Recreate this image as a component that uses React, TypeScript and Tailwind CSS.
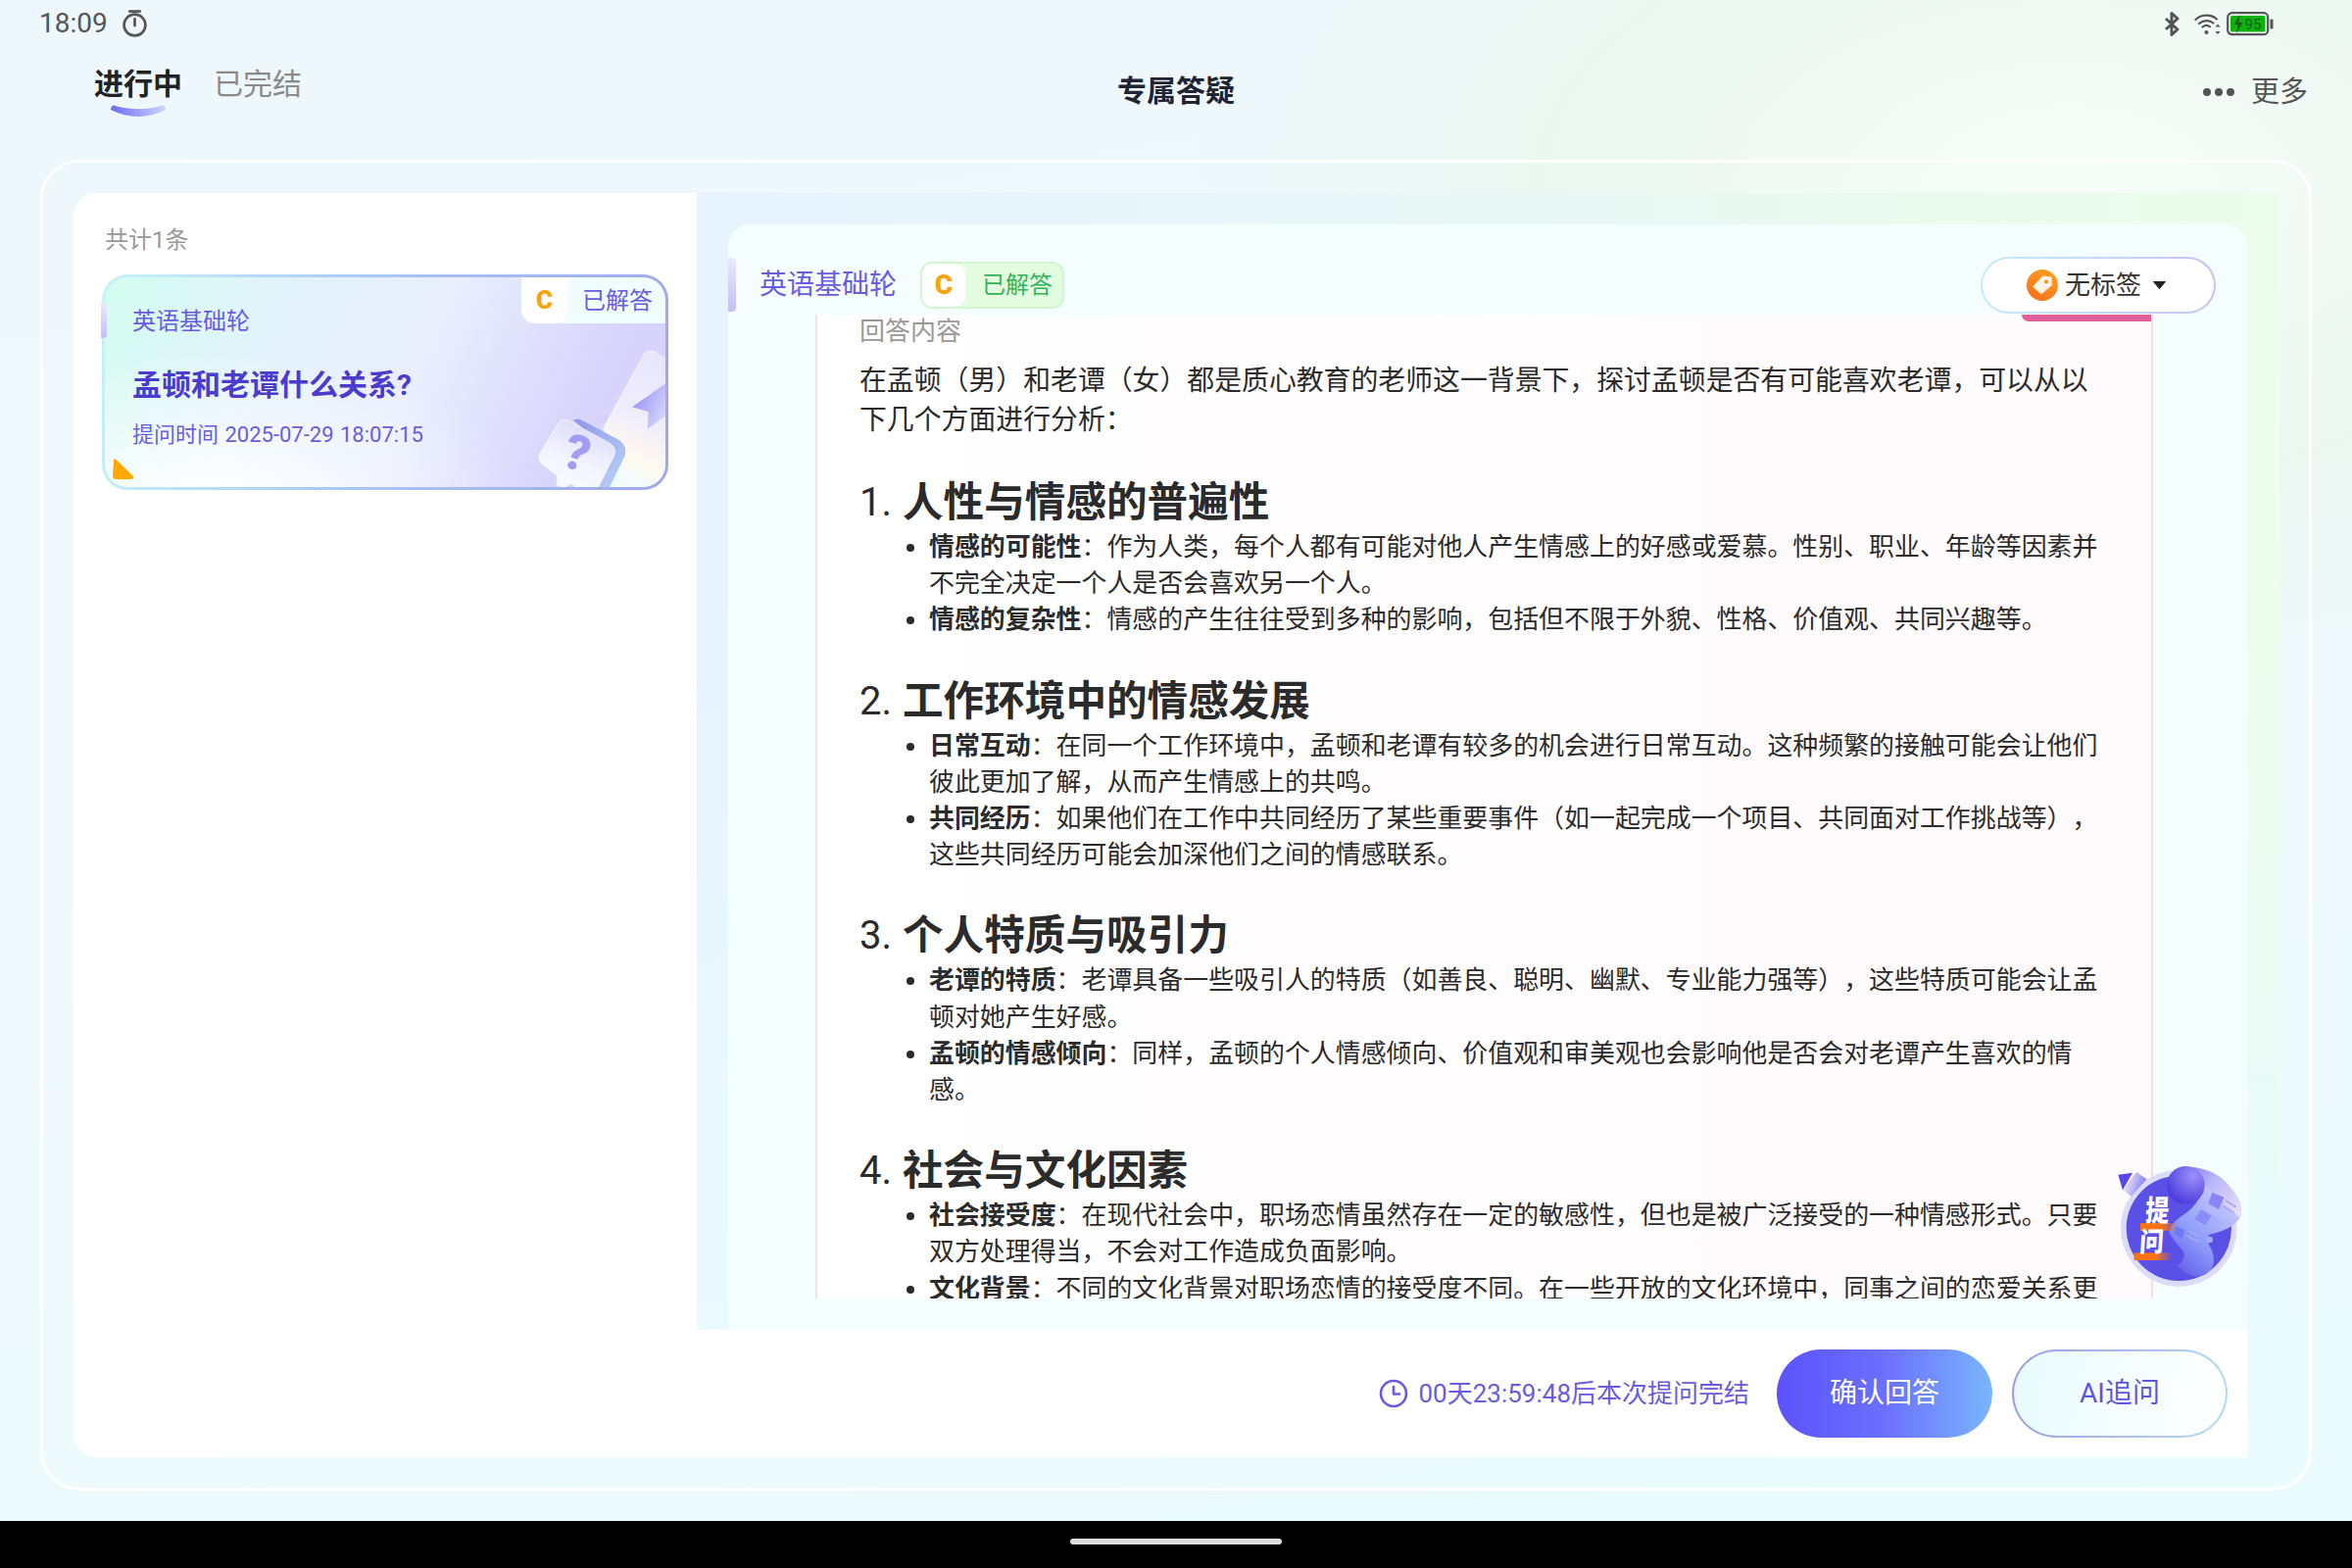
import React from "react";

const Stopwatch = () => (
  <svg width="27" height="30" viewBox="0 0 26 28" fill="none" stroke="#555" strokeWidth="2.6">
    <path d="M8 2h10" strokeLinecap="round" />
    <circle cx="13" cy="15.5" r="10.5" />
    <path d="M13 9.5v6.5" strokeLinecap="round" />
  </svg>
);

const StatusIcons = () => (
  <div className="flex items-center">
    <svg width="17" height="25" viewBox="0 0 17 25" fill="none" stroke="#555" strokeWidth="3">
      <path d="M2 7l12 11-6 5.5V1.5L14 7 2 18" strokeLinejoin="round" />
    </svg>
    <svg className="ml-[14px]" width="28" height="23" viewBox="0 0 28 23" fill="none" stroke="#555" strokeLinecap="round">
      <path d="M1.5 7C7 1.5 17 1 23 6.5" strokeWidth="2.2" />
      <path d="M5 11c4-3.5 10-4 14.500 -.5" strokeWidth="2.2" />
      <path d="M8.500 14.500c2.500-2 5.500-2 7.500-.2" strokeWidth="2.2" />
      <circle cx="12.500" cy="20" r="2" fill="#555" stroke="none" />
      <path d="M24 11.500l-2.500 3h5zM24 22l-2.500-3h5z" fill="#555" stroke="none" />
    </svg>
    <svg className="ml-[5px]" width="48" height="25" viewBox="0 0 48 25">
      <rect x="1.200" y="1.200" width="41" height="22" rx="4.500" fill="none" stroke="#555" strokeWidth="2.200" />
      <rect x="4" y="4" width="35.500" height="16.500" rx="1.500" fill="#0db30d" />
      <rect x="44.500" y="7.500" width="3" height="10" rx="1" fill="#555" />
      <path d="M13.500 3l-6 10h4l-1.500 9 6.500-11h-4z" fill="#1c5a1c" />
      <text x="18.500" y="18" fontSize="15" fill="#14601a" fontFamily="Roboto, sans-serif">95</text>
    </svg>
  </div>
);

const CardDeco = () => (
  <svg className="absolute left-[413px] top-[-8px]" width="180" height="240" viewBox="0 0 540 720">
    <defs>
      <linearGradient id="dp" x1="0.8" y1="0" x2="0.5" y2="1">
        <stop offset="0" stopColor="#e6e4fd" />
        <stop offset="0.55" stopColor="#f0eefc" />
        <stop offset="0.8" stopColor="#fff9ee" />
        <stop offset="1" stopColor="#f0fcff" />
      </linearGradient>
      <linearGradient id="db" x1="0" y1="0" x2="1" y2="0.6">
        <stop offset="0" stopColor="#8f88f2" />
        <stop offset="1" stopColor="#d9d6fc" />
      </linearGradient>
      <linearGradient id="dk" x1="0" y1="0" x2="0.8" y2="1">
        <stop offset="0" stopColor="#8e96e8" />
        <stop offset="1" stopColor="#b9d2f6" />
      </linearGradient>
      <linearGradient id="df" x1="0.7" y1="0" x2="0.3" y2="1">
        <stop offset="0" stopColor="#d9d9fa" />
        <stop offset="0.6" stopColor="#f4f4fe" />
        <stop offset="1" stopColor="#f7fbff" />
      </linearGradient>
    </defs>
    <path d="M408 266Q422 240 448 254L540 302V680H270L290 480Z" fill="url(#dp)" />
    <path d="M408 266Q422 240 448 254" stroke="#ffffff" strokeWidth="3" fill="none" />
    <path d="M408 266L285 490" stroke="#ffffff" strokeWidth="2" fill="none" />
    <path d="M375 421L490 340V440L422 488L425 436Z" fill="url(#db)" />
    <path d="M196 462Q206 454 222 462L335 522Q362 540 352 572L300 680H262L310 560Z" fill="url(#dk)" />
    <path d="M148 472Q160 454 182 464L304 530Q330 546 320 570L270 670H205L190 655L165 668L145 660L145 630L105 600Q82 585 94 562Z" fill="url(#df)" stroke="#ffffff" strokeWidth="2" />
    <text x="168" y="612" fontSize="150" fontWeight="900" fill="#a29cf2" fontFamily="Roboto, sans-serif" transform="rotate(18 200 560)">?</text>
  </svg>
);

const AskBall = () => (
  <svg className="absolute left-[1429px] top-[973px]" width="170" height="170" viewBox="0 0 510 510">
    <defs>
      <linearGradient id="br" x1="0" y1="0" x2="1" y2="1">
        <stop offset="0" stopColor="#8f8af5" />
        <stop offset="0.35" stopColor="#b8b6fa" />
        <stop offset="1" stopColor="#efe2f4" />
      </linearGradient>
      <linearGradient id="br2" x1="0" y1="1" x2="0.6" y2="0">
        <stop offset="0" stopColor="#5a50e6" />
        <stop offset="0.45" stopColor="#8fa0fb" />
        <stop offset="1" stopColor="#d7d2fa" />
      </linearGradient>
      <radialGradient id="bs" cx="0.7" cy="0.25" r="0.8">
        <stop offset="0" stopColor="#9d8ffb" />
        <stop offset="1" stopColor="#4a3cdc" />
      </radialGradient>
      <linearGradient id="bp" x1="0" y1="0" x2="1" y2="0.3">
        <stop offset="0" stopColor="#ffffff" />
        <stop offset="1" stopColor="#8a80f0" />
      </linearGradient>
      <linearGradient id="bo" x1="0" y1="0" x2="1" y2="0">
        <stop offset="0" stopColor="#f97316" />
        <stop offset="0.6" stopColor="#f97316" />
        <stop offset="1" stopColor="#f97316" stopOpacity="0.1" />
      </linearGradient>
    </defs>
    <circle cx="250" cy="250" r="178" fill="#dcdcf9" />
    <circle cx="250" cy="250" r="161" fill="#5a50e6" />
    <path d="M78 133L105 152L152 100L120 78Z" fill="url(#bp)" />
    <path d="M64 86L108 80L78 133Z" fill="#5a46e8" />
    <path d="M280 62Q350 70 410 130Q450 170 438 215Q420 250 350 268Q325 272 352 320Q368 370 330 392Q290 410 245 365Q275 345 262 318Q240 295 222 268Q215 240 270 205Q330 160 320 100Z" fill="url(#br2)" />
    <path d="M290 62Q370 70 412 130Q450 175 436 218L340 130Z" fill="url(#br)" />
    <circle cx="271" cy="118" r="58" fill="url(#bs)" />
    <path d="M352 140L388 155L372 192L340 175Z" fill="#8a82f5" />
    <path d="M318 192L350 212L330 240L298 222Z" fill="#8a8cf8" />
    <path d="M240 245L268 255L258 282L236 265Z" fill="#6d78f5" />
    <path d="M392 165L425 185M385 182L418 202M352 218L385 238M345 232L372 250M278 258L315 276M272 272L312 292" stroke="#a9a8f4" strokeWidth="5" />
    <circle cx="344" cy="285" r="10" fill="#a9a6fb" />
    <rect x="132" y="234" width="110" height="24" fill="url(#bo)" />
    <rect x="113" y="325" width="113" height="23" fill="url(#bo)" />
    <text fontSize="80" fontWeight="900" fill="#ffffff" fontFamily="'Noto Sans CJK SC', sans-serif" transform="translate(146 228) scale(0.9 1.12) skewX(-4)">提</text>
    <text fontSize="80" fontWeight="900" fill="#ffffff" fontFamily="'Noto Sans CJK SC', sans-serif" transform="translate(128 320) scale(0.92 1.04) skewX(-4)">问</text>
  </svg>
);

const Section = ({ n, title, items }: { n: number; title: string; items: [string, string][] }) => (
  <section>
    <h3 className="mt-[37px] flex h-[54px] items-center text-[41.6px] font-bold leading-[54px] text-[#2b2b2b]">
      <span className="w-[44px] text-[40px] font-normal">{n}.</span>
      {title}
    </h3>
    <ul className="list-disc pl-[71px] text-[25.93px] leading-[37.2px] text-[#2b2b2b]">
      {items.map(([b, t]) => (
        <li key={b}>
          <strong className="font-bold">{b}</strong>
          {t}
        </li>
      ))}
    </ul>
  </section>
);

export default function App() {
  return (
    <div
      lang="zh-CN"
      className="relative flex h-[1600px] w-[2400px] flex-col overflow-hidden bg-[radial-gradient(ellipse_900px_500px_at_88%_12%,#f6fdf8_0%,#ecf7f2_60%,transparent_100%),linear-gradient(170deg,#eef7fb_0%,#f0f9fb_50%,#e9fcfe_100%)] font-['Roboto','Noto_Sans_CJK_SC',sans-serif] [text-spacing-trim:space-all]"
    >
      <div className="flex h-[48px] items-center justify-between pl-[40px] pr-[80px]">
        <div className="flex items-center gap-[14px] text-[28px] text-[#555]">
          18:09
          <Stopwatch />
        </div>
        <StatusIcons />
      </div>

      <header className="grid h-[115px] grid-cols-[1fr_auto_1fr] px-[45px]">
        <div className="flex gap-[32px] pl-[51px] pt-[20px]">
          <div className="relative text-[30px] font-bold leading-[36px] text-[#222]">
            进行中
            <svg className="absolute left-[17px] top-[39px]" width="56" height="14" viewBox="0 0 56 14">
              <defs>
                <linearGradient id="tu" x1="0" x2="1" y1="0" y2="0">
                  <stop offset="0" stopColor="#6f6cf5" />
                  <stop offset="1" stopColor="#c8d6fb" />
                </linearGradient>
              </defs>
              <path d="M3 0.500Q28 8 53 0.500Q56 1 56 5Q28 19 0 5Q0 1 3 0.500Z" fill="url(#tu)" />
            </svg>
          </div>
          <div className="text-[30px] leading-[36px] text-[#8a8a8a]">已完结</div>
        </div>
        <div className="pt-[27px] text-[30px] font-bold leading-[36px] text-[#1f2533]">专属答疑</div>
        <div className="flex items-start justify-end gap-[17px] pt-[28px]">
          <div className="flex h-[36px] items-center gap-[4px]">
            <span className="h-[8px] w-[8px] rounded-full bg-[#555]" />
            <span className="h-[8px] w-[8px] rounded-full bg-[#555]" />
            <span className="h-[8px] w-[8px] rounded-full bg-[#555]" />
          </div>
          <span className="text-[29px] leading-[36px] text-[#555]">更多</span>
        </div>
      </header>

      <main className="mx-[41px] mb-[31px] flex-1 rounded-[40px] border-[3px] border-white p-[31px]">
        <div className="flex h-full">
          <aside className="h-full w-[636px] rounded-l-[24px] bg-white pl-[29px] pt-[34px]">
            <div className="pl-[3px] text-[24px] leading-[28px] text-[#999]">共计1条</div>
            <div className="relative mt-[21px] h-[220px] w-[578px] rounded-[26px] bg-[linear-gradient(100deg,#c8f3f8_0%,#a9c8f5_45%,#9fa6ee_100%)] p-[3px]">
              <span className="absolute left-[-1px] top-[29px] z-10 h-[36px] w-[6px] rounded-r-[4px] bg-[linear-gradient(180deg,#ebe8fd,#c5bdf7)]" />
              <div className="relative h-full w-full overflow-hidden rounded-[23px] bg-[radial-gradient(ellipse_at_18%_105%,#ffffff_0%,#ffffff00_48%),linear-gradient(115deg,#d2fdef_0%,#e2f2fa_28%,#e9eefd_55%,#d8d4fc_82%,#d6d2fc_100%)] pl-[28px]">
                <CardDeco />
                <div className="absolute right-0 top-0 flex h-[47px] w-[147px] items-center rounded-bl-[14px] bg-[#f0fdff]">
                  <span className="flex h-[47px] w-[47px] items-center justify-center rounded-b-[14px] bg-white text-[26px] font-black text-[#f9a30b]">C</span>
                  <span className="ml-[15px] text-[24px] text-[#6a5ce0]">已解答</span>
                </div>
                <div className="pt-[28px] text-[24px] leading-[34px] text-[#6a5ce0]">英语基础轮</div>
                <div className="mt-[28px] text-[30px] font-bold leading-[40px] text-[#4b3bcf]">孟顿和老谭什么关系?</div>
                <div className="mt-[15px] text-[22px] leading-[32px] text-[#6a5ce0] [word-spacing:1px]">提问时间 2025-07-29 18:07:15</div>
                <svg className="absolute left-[8px] top-[185px]" width="22" height="21" viewBox="0 0 22 21">
                  <path d="M1 1.500Q2 -0.500 3.500 1L21 18Q22 21 19 21H3Q0 21 0 18Z" fill="#ffa800" />
                </svg>
              </div>
            </div>
          </aside>

          <div className="relative flex h-full w-[1614px] flex-col">
            <div className="h-[1160px] bg-[linear-gradient(to_bottom,#00000000_35%,#e9fbfe_100%),linear-gradient(90deg,#e6f3fe_0%,#e8f8f3_60%,#edfdeb_100%)] px-[32px] pt-[32px]">
              <div className="flex h-full flex-col rounded-t-[22px] bg-[#f5feff]">
                <div className="relative flex h-[92px] shrink-0 items-start justify-between pr-[32px]">
                  <span className="absolute left-0 top-[34px] h-[55px] w-[8px] rounded-r-[4px] bg-[linear-gradient(180deg,#ebe8fd,#c5bdf7)]" />
                  <div className="flex items-center pl-[32px] pt-[38px]">
                    <span className="text-[28px] leading-[48px] text-[#6a5ce0]">英语基础轮</span>
                    <div className="ml-[24px] flex h-[48px] w-[147px] items-center rounded-[12px] border-2 border-[#d3f5cf] bg-[#e3fbdf]">
                      <span className="flex h-full w-[44px] items-center justify-center rounded-[10px] bg-white text-[28px] font-black text-[#f9a30b]">C</span>
                      <span className="ml-[17px] text-[24px] text-[#34b45a]">已解答</span>
                    </div>
                  </div>
                  <div className="mt-[33px] h-[58px] w-[240px] rounded-full bg-[linear-gradient(90deg,#c4ecfb,#c5c3f0)] p-[2px]">
                    <div className="flex h-full w-full items-center rounded-full bg-white pl-[45px]">
                      <svg width="32" height="32" viewBox="0 0 32 32">
                        <defs>
                          <linearGradient id="tg" x1="0.8" y1="0" x2="0.2" y2="1">
                            <stop offset="0" stopColor="#ffa31f" />
                            <stop offset="1" stopColor="#f76d1c" />
                          </linearGradient>
                        </defs>
                        <circle cx="16" cy="16" r="16" fill="url(#tg)" />
                        <path d="M17 7.500L24.500 8.500L25 15.500L15 24L7.500 17.500Z" fill="#fff3e6" stroke="#fff3e6" strokeWidth="2" strokeLinejoin="round" />
                        <circle cx="20" cy="12.500" r="2" fill="#f98a1c" />
                      </svg>
                      <span className="ml-[7px] text-[26px] text-[#333]">无标签</span>
                      <svg className="ml-[12px]" width="13" height="8" viewBox="0 0 13 8">
                        <path d="M0.500 0.500H12.500L6.500 7.500Z" fill="#222" stroke="#222" strokeLinejoin="round" />
                      </svg>
                    </div>
                  </div>
                </div>
                <div className="pl-[89px] pr-[96px]">
                  <div className="relative h-[1004px] overflow-hidden border-x-2 border-[#f4dfe3] bg-[linear-gradient(90deg,#ffffff_0%,#fffafc_100%)] pl-[43px] pr-[50px]">
                    <span className="absolute right-0 top-0 h-[7px] w-[132px] rounded-bl-[8px] bg-[#e0609c]" />
                    <div className="pt-[2px] text-[26px] leading-[30px] text-[#999]">回答内容</div>
                    <p className="mt-[16px] text-[27.86px] leading-[40px] text-[#2b2b2b]">
                      在孟顿（男）和老谭（女）都是质心教育的老师这一背景下，探讨孟顿是否有可能喜欢老谭，可以从以下几个方面进行分析：
                    </p>
                    <Section
                      n={1}
                      title="人性与情感的普遍性"
                      items={[
                        ["情感的可能性", "：作为人类，每个人都有可能对他人产生情感上的好感或爱慕。性别、职业、年龄等因素并不完全决定一个人是否会喜欢另一个人。"],
                        ["情感的复杂性", "：情感的产生往往受到多种的影响，包括但不限于外貌、性格、价值观、共同兴趣等。"],
                      ]}
                    />
                    <Section
                      n={2}
                      title="工作环境中的情感发展"
                      items={[
                        ["日常互动", "：在同一个工作环境中，孟顿和老谭有较多的机会进行日常互动。这种频繁的接触可能会让他们彼此更加了解，从而产生情感上的共鸣。"],
                        ["共同经历", "：如果他们在工作中共同经历了某些重要事件（如一起完成一个项目、共同面对工作挑战等），这些共同经历可能会加深他们之间的情感联系。"],
                      ]}
                    />
                    <Section
                      n={3}
                      title="个人特质与吸引力"
                      items={[
                        ["老谭的特质", "：老谭具备一些吸引人的特质（如善良、聪明、幽默、专业能力强等），这些特质可能会让孟顿对她产生好感。"],
                        ["孟顿的情感倾向", "：同样，孟顿的个人情感倾向、价值观和审美观也会影响他是否会对老谭产生喜欢的情感。"],
                      ]}
                    />
                    <Section
                      n={4}
                      title="社会与文化因素"
                      items={[
                        ["社会接受度", "：在现代社会中，职场恋情虽然存在一定的敏感性，但也是被广泛接受的一种情感形式。只要双方处理得当，不会对工作造成负面影响。"],
                        ["文化背景", "：不同的文化背景对职场恋情的接受度不同。在一些开放的文化环境中，同事之间的恋爱关系更容易被接受。"],
                      ]}
                    />
                  </div>
                </div>
              </div>
            </div>
            <div className="flex h-[130px] w-[1582px] items-center justify-end bg-white pr-[20px]">
              <svg width="30" height="30" viewBox="0 0 30 30" fill="none" stroke="#6a5ce0" strokeWidth="2.600">
                <circle cx="15" cy="15" r="13" />
                <path d="M15 8v7.500h6" strokeLinecap="round" strokeLinejoin="round" />
              </svg>
              <span className="ml-[11px] text-[26px] text-[#6a5ce0]">00天23:59:48后本次提问完结</span>
              <button className="ml-[28px] h-[90px] w-[220px] rounded-[45px] bg-[linear-gradient(90deg,#5c52fb_0%,#6a70fc_50%,#7ab5ff_100%)] text-[28px] text-white">确认回答</button>
              <div className="ml-[20px] h-[90px] w-[220px] rounded-[45px] bg-[linear-gradient(100deg,#9a9ee0,#b5dcf7)] p-[2px]">
                <button className="h-full w-full rounded-[43px] bg-[linear-gradient(100deg,#e8fbff,#ffffff)] text-[28px] text-[#5e56e0]">AI追问</button>
              </div>
            </div>
            <AskBall />
          </div>
        </div>
      </main>

      <div className="flex h-[48px] items-center justify-center bg-black">
        <span className="h-[6px] w-[216px] translate-y-[-3px] rounded-full bg-[#ddd]" />
      </div>
    </div>
  );
}
